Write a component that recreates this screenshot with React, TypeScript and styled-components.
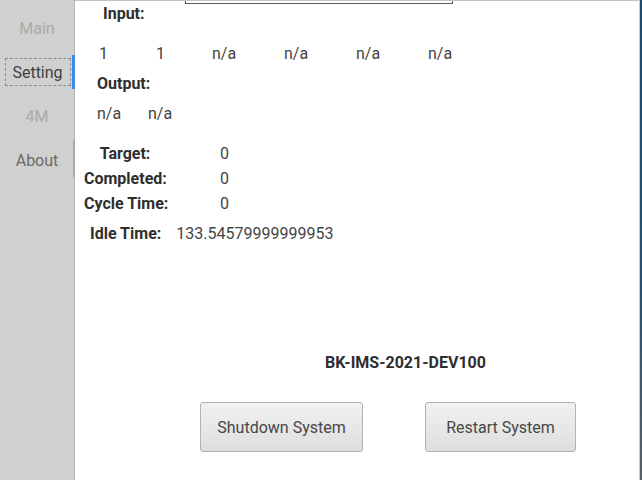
import React from "react";
import styled, { createGlobalStyle } from "styled-components";

const Global = createGlobalStyle`
  html, body { margin: 0; padding: 0; background: #ffffff; overflow: hidden; }
  body { font-family: Roboto, "Noto Sans", "Liberation Sans", sans-serif; }
`;

const Window = styled.div`
  width: 642px;
  height: 480px;
  display: flex;
  background: #ffffff;
`;

const Sidebar = styled.nav`
  width: 74px;
  flex: none;
  background: #d0d0d0;
  border-right: 1px solid #b3b3b3;
  padding-top: 6px;
  box-sizing: content-box;
  display: flex;
  flex-direction: column;
`;

const NavItem = styled.div<{ $tone: "disabled" | "active" | "normal"; $marker?: "blue" | "gray" }>`
  position: relative;
  height: 44px;
  display: flex;
  align-items: center;
  justify-content: center;
  font-size: 16px;
  color: ${(p) => (p.$tone === "disabled" ? "#aaaaaa" : p.$tone === "active" ? "#404040" : "#6a6a6a")};
  &::after {
    content: "";
    display: ${(p) => (p.$marker ? "block" : "none")};
    position: absolute;
    right: -1px;
    width: ${(p) => (p.$marker === "blue" ? "3px" : "2px")};
    top: ${(p) => (p.$marker === "blue" ? "5px" : "2px")};
    height: ${(p) => (p.$marker === "blue" ? "34px" : "37px")};
    background: ${(p) => (p.$marker === "blue" ? "#3d8ee6" : "#a9a9a9")};
  }
`;

const FocusBox = styled.span`
  width: 64px;
  height: 26px;
  margin-left: 1px;
  border: 1px dashed #8c8c8c;
  display: flex;
  align-items: center;
  justify-content: center;
`;

const Main = styled.main`
  flex: 1;
  border-top: 1px solid #c4c4c4;
  border-right: 1px solid #c8c8c8;
  display: flex;
  flex-direction: column;
  color: #444444;
  font-size: 16px;
  min-width: 0;
`;

const Edge = styled.div`
  width: 2px;
  flex: none;
  background: linear-gradient(#1c4a6e, #27506e 60%, #5a6066);
`;

const FrameTail = styled.div`
  margin-left: 110px;
  width: 266px;
  height: 2px;
  border: 1px solid #5a5a5a;
  border-top: none;
  flex: none;
`;

const Title = styled.div<{ $indent: number; $gap: number }>`
  margin-left: ${(p) => p.$indent}px;
  margin-top: ${(p) => p.$gap}px;
  line-height: 20px;
  height: 20px;
  font-weight: 700;
  color: #2e2e2e;
`;

const ValueRow = styled.div<{ $indent: number; $gap: number }>`
  margin-left: ${(p) => p.$indent}px;
  margin-top: ${(p) => p.$gap}px;
  display: flex;
  line-height: 20px;
  height: 20px;
`;

const Cell = styled.span<{ $w: number }>`
  width: ${(p) => p.$w}px;
  flex: none;
`;

const StatsGrid = styled.div`
  margin-left: 9px;
  margin-top: 17px;
  display: grid;
  grid-template-columns: 82px auto;
  column-gap: 54px;
  grid-auto-rows: 25px;
  align-items: center;
  justify-content: start;
`;

const StatLabel = styled.span`
  font-weight: 700;
  color: #2e2e2e;
  text-align: center;
  white-space: nowrap;
`;

const IdleRow = styled.div`
  margin-left: 15px;
  margin-top: 8px;
  display: flex;
  gap: 15px;
  line-height: 20px;
`;

const Footer = styled.div`
  margin-top: auto;
  padding-bottom: 28px;
  display: flex;
  flex-direction: column;
`;

const DeviceId = styled.div`
  margin-left: 250px;
  margin-bottom: 1px;
  line-height: 20px;
  font-weight: 700;
  color: #2e2e2e;
`;

const ButtonRow = styled.div`
  margin-top: 28px;
  margin-left: 125px;
  display: flex;
  gap: 62px;
`;

const SysButton = styled.button<{ $w: number }>`
  width: ${(p) => p.$w}px;
  height: 50px;
  border: 1px solid #b2b2b2;
  border-radius: 3px;
  background: linear-gradient(#f1f1f1, #dedede);
  font-family: Roboto, "Noto Sans", "Liberation Sans", sans-serif;
  font-size: 16px;
  color: #474747;
  padding: 0;
`;

export default function App() {
  return (
    <>
      <Global />
      <Window>
        <Sidebar>
          <NavItem $tone="disabled">Main</NavItem>
          <NavItem $tone="active" $marker="blue">
            <FocusBox>Setting</FocusBox>
          </NavItem>
          <NavItem $tone="disabled">4M</NavItem>
          <NavItem $tone="normal" $marker="gray">About</NavItem>
        </Sidebar>
        <Main>
          <FrameTail />
          <Title $indent={28} $gap={0}>Input:</Title>
          <ValueRow $indent={24} $gap={20}>
            {[
              ["1", 57],
              ["1", 56],
              ["n/a", 72],
              ["n/a", 72],
              ["n/a", 72],
              ["n/a", 72],
            ].map(([t, w], i) => (
              <Cell key={i} $w={w as number}>{t}</Cell>
            ))}
          </ValueRow>
          <Title $indent={22} $gap={10}>Output:</Title>
          <ValueRow $indent={22} $gap={10}>
            <Cell $w={51}>n/a</Cell>
            <Cell $w={51}>n/a</Cell>
          </ValueRow>
          <StatsGrid>
            <StatLabel>Target:</StatLabel>
            <span>0</span>
            <StatLabel>Completed:</StatLabel>
            <span>0</span>
            <StatLabel>Cycle Time:</StatLabel>
            <span>0</span>
          </StatsGrid>
          <IdleRow>
            <StatLabel>Idle Time:</StatLabel>
            <span>133.54579999999953</span>
          </IdleRow>
          <Footer>
            <DeviceId>BK-IMS-2021-DEV100</DeviceId>
            <ButtonRow>
              <SysButton $w={163}>Shutdown System</SysButton>
              <SysButton $w={151}>Restart System</SysButton>
            </ButtonRow>
          </Footer>
        </Main>
        <Edge />
      </Window>
    </>
  );
}
